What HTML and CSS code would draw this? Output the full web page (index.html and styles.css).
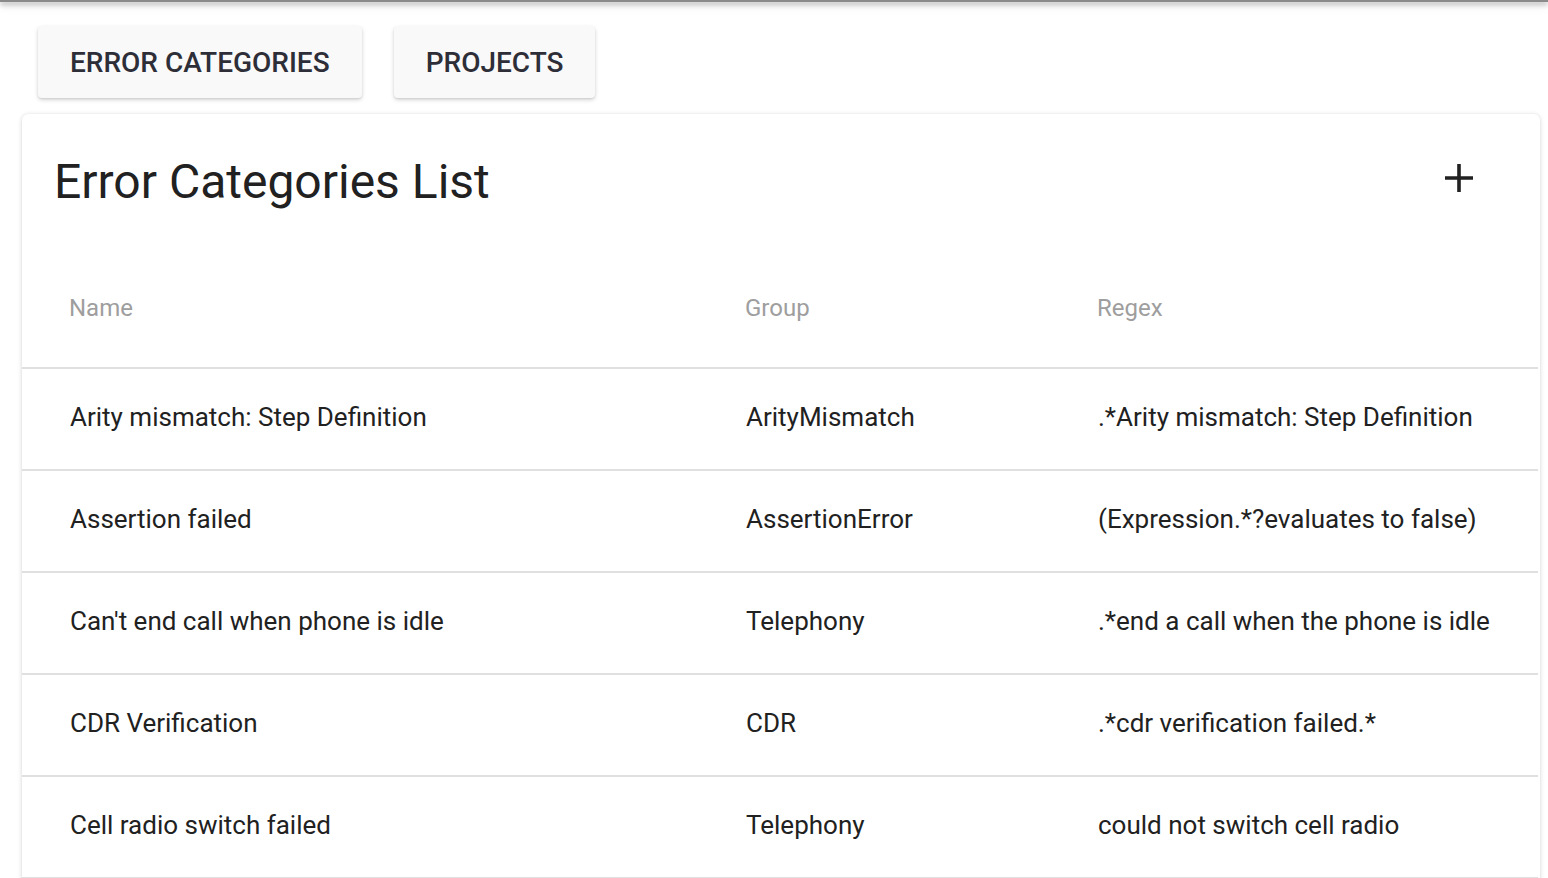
FILE: index.html
```html
<!DOCTYPE html>
<html>
<head>
<meta charset="utf-8">
<link rel="stylesheet" href="styles.css">
</head>
<body>
<div class="appbar"></div>
<main class="page">
  <nav class="tabs">
    <button class="tab">ERROR CATEGORIES</button>
    <button class="tab">PROJECTS</button>
  </nav>
  <section class="card">
    <div class="card-head">
      <h1 class="title">Error Categories List</h1>
      <button class="add" aria-label="Add">
        <svg width="30" height="30" viewBox="0 0 30 30"><path d="M15 1V29M1 15H29" stroke="#212121" stroke-width="3.6" fill="none"/></svg>
      </button>
    </div>
    <table class="grid">
      <colgroup><col class="c1"><col class="c2"><col class="c3"></colgroup>
      <thead>
        <tr><th>Name</th><th>Group</th><th>Regex</th></tr>
      </thead>
      <tbody>
        <tr><td>Arity mismatch: Step Definition</td><td>ArityMismatch</td><td>.*Arity mismatch: Step Definition</td></tr>
        <tr><td>Assertion failed</td><td>AssertionError</td><td>(Expression.*?evaluates to false)</td></tr>
        <tr><td>Can't end call when phone is idle</td><td>Telephony</td><td>.*end a call when the phone is idle</td></tr>
        <tr><td>CDR Verification</td><td>CDR</td><td>.*cdr verification failed.*</td></tr>
        <tr><td>Cell radio switch failed</td><td>Telephony</td><td>could not switch cell radio</td></tr>
      </tbody>
    </table>
  </section>
</main>
</body>
</html>
```
FILE: styles.css
```css
html, body {
  margin: 0;
  padding: 0;
  background: #ffffff;
  font-family: Roboto, "Liberation Sans", sans-serif;
  overflow: hidden;
}
.appbar {
  height: 2px;
  background: #8a8a8a;
  box-shadow: 0 2px 5px rgba(0,0,0,0.45), 0 4px 10px rgba(0,0,0,0.15);
}
.page {
  padding: 24px 8px 0 22px;
}
.tabs {
  display: flex;
  gap: 32px;
  padding-left: 16px;
}
.tab {
  height: 72px;
  padding: 0 32px;
  border: none;
  border-radius: 4px;
  background: #f9f9f9;
  box-shadow: 0 2px 4px rgba(0,0,0,0.16), 0 1px 2px rgba(0,0,0,0.08);
  font-family: Roboto, "Liberation Sans", sans-serif;
  font-weight: 500;
  font-size: 28px;
  color: #2d2e38;
  letter-spacing: 0;
}
.card {
  margin-top: 16px;
  background: #ffffff;
  border-radius: 6px;
  box-shadow: 0 1px 5px rgba(0,0,0,0.16), 0 0 2px rgba(0,0,0,0.06);
  width: 1518px;
  height: 800px;
}
.card-head {
  display: flex;
  justify-content: space-between;
  align-items: flex-start;
  padding: 40px 66px 0 32px;
  height: 101px;
}
.title {
  margin: 0;
  font-size: 48px;
  font-weight: 400;
  color: #212121;
  line-height: 56px;
}
.add {
  border: none;
  background: none;
  padding: 0;
  margin-top: 9px;
  width: 30px;
  height: 30px;
  display: flex;
}
.grid {
  width: 1516px;
  border-collapse: collapse;
  table-layout: fixed;
}
.c1 { width: 676px; }
.c2 { width: 352px; }
.c3 { width: 488px; }
.grid th {
  height: 106px;
  padding: 0 0 6px 47px;
  text-align: left;
  font-weight: 400;
  font-size: 24px;
  color: #9e9e9e;
  vertical-align: middle;
  border-bottom: 2px solid #e0e0e0;
}
.grid td {
  height: 96px;
  padding: 0 0 4px 48px;
  font-size: 26px;
  color: #212121;
  vertical-align: middle;
  border-bottom: 2px solid #e0e0e0;
  white-space: nowrap;
}
```
